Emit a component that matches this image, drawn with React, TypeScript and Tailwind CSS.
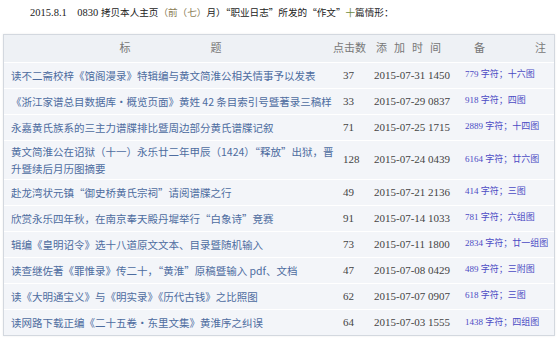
const ROWS = [
  { title: "读不二斋校梓《馆阁漫录》特辑编与黄文简淮公相关情事予以发表", hits: 37, time: "2015-07-31 1450", chars: "779", note: "十六图" },
  { title: "《浙江家谱总目数据库・概览页面》黄姓 42 条目索引号暨著录三稿样", hits: 33, time: "2015-07-29 0837", chars: "918", note: "四图" },
  { title: "永嘉黄氏族系的三主力谱牒排比暨周边部分黄氏谱牒记叙", hits: 71, time: "2015-07-25 1715", chars: "2889", note: "十四图" },
  { title: "黄文简淮公在诏狱（十一）永乐廿二年甲辰（1424）“释放”出狱，晋升暨续后月历图摘要", hits: 128, time: "2015-07-24 0439", chars: "6164", note: "廿六图" },
  { title: "赴龙湾状元镇“御史桥黄氏宗祠”请阅谱牒之行", hits: 49, time: "2015-07-21 2136", chars: "414", note: "三图" },
  { title: "欣赏永乐四年秋，在南京奉天殿丹墀举行“白象诗”竞赛", hits: 91, time: "2015-07-14 1033", chars: "781", note: "六组图" },
  { title: "辑编《皇明诏令》选十八道原文文本、目录暨随机输入", hits: 73, time: "2015-07-11 1800", chars: "2834", note: "廿一组图" },
  { title: "读查继佐著《罪惟录》传二十，“黄淮”原稿暨输入 pdf、文档", hits: 47, time: "2015-07-08 0429", chars: "489", note: "三附图" },
  { title: "读《大明通宝义》与《明实录》《历代古钱》之比照图", hits: 62, time: "2015-07-07 0907", chars: "618", note: "三图" },
  { title: "读网路下载正编《二十五卷・东里文集》黄淮序之纠误", hits: 64, time: "2015-07-03 1555", chars: "1438", note: "四组图" },
];

const SERIF = "font-['Liberation_Serif','Noto_Sans_CJK_SC',serif]";
const CJK = "font-['Noto_Sans_CJK_SC','Liberation_Serif',sans-serif]";

export default function App() {
  return (
    <div className={`w-[560px] h-[342px] bg-white overflow-hidden ${SERIF}`}>
      {/* heading line */}
      <p className="pl-[30px] pt-[5px] h-[34px] text-[9.6px] leading-[14px] text-[#222] whitespace-pre">
        <span className="text-[10.5px]">{"2015.8.1    0830 "}</span>
        <span className={CJK}>
          拷贝本人主页
          <span className="text-[#8b7d55]">（前（七）</span>
          月）“职业日志”所发的“作文”
          <span className="text-[#6f8a3c]">十</span>
          篇情形：
        </span>
      </p>

      <div className="ml-[3px] w-[552px] border border-[#d3d8df] shadow-[0_0_2px_rgba(0,0,0,0.08)]">
        <table className="w-full border-collapse table-fixed">
          <colgroup>
            <col className="w-[333px]" />
            <col className="w-[37px]" />
            <col className="w-[88px]" />
            <col className="w-[92px]" />
          </colgroup>
          <thead>
            <tr className="h-[27px] bg-[#eef1f5] border-b border-white text-[11px] text-[#777]">
              <th className="font-normal">
                <div className="flex justify-center gap-[80px]">
                  <span>标</span>
                  <span>题</span>
                </div>
              </th>
              <th className="font-normal text-left">
                <div className="-ml-[4px] whitespace-nowrap">点击数</div>
              </th>
              <th className="font-normal">
                <div className="flex gap-[7px] pl-[2px]">
                  <span>添</span>
                  <span>加</span>
                  <span>时</span>
                  <span>间</span>
                </div>
              </th>
              <th className="font-normal">
                <div className="flex gap-[50px] pl-[12px]">
                  <span>备</span>
                  <span>注</span>
                </div>
              </th>
            </tr>
          </thead>
          <tbody>
            {ROWS.map((r) => (
              <tr key={r.time} className="h-[26px] bg-[#f3f5f9] border-b border-white last:border-b-0">
                <td className={`pl-[7px] pr-[2px] py-[2px] text-[10.5px] leading-[17px] text-[#4d6c9f] ${CJK}`}>{r.title}</td>
                <td className="pl-[6px] text-[11px] text-[#444]">{r.hits}</td>
                <td className="text-[11px] text-[#444] whitespace-nowrap">{r.time}</td>
                <td className="pl-[3px] text-[9px] text-[#4b4bc4] whitespace-nowrap">
                  {r.chars} 字符；{r.note}
                </td>
              </tr>
            ))}
          </tbody>
        </table>
      </div>
    </div>
  );
}
